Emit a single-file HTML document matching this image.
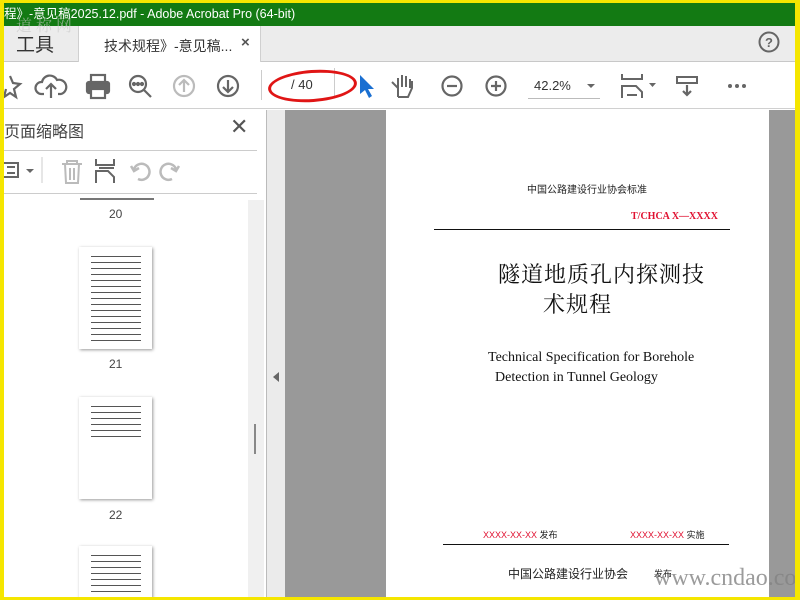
<!DOCTYPE html>
<html><head><meta charset="utf-8"><style>
*{margin:0;padding:0;box-sizing:border-box}
body{width:800px;height:600px;overflow:hidden;background:#f5e600;position:relative;font-family:"Liberation Sans","Noto Sans CJK SC",sans-serif}
.abs{position:absolute}
#app{position:absolute;left:4px;top:3px;width:791px;height:594px;background:#fff;overflow:hidden}
#low{position:absolute;left:0;top:-3px;width:791px;height:600px}
.th{background-color:#fff;box-shadow:1px 1px 3px #999;background-image:repeating-linear-gradient(#fff 0 3px,#555 3px 4px,#fff 4px 6px);background-repeat:no-repeat}
</style></head><body>
<div id="app">
 <div id="low">
 <div class="abs" style="left:0;top:23px;width:791px;height:39px;background:#ececec;border-bottom:1px solid #c8c8c8"></div>
 <div class="abs" style="left:12px;top:30px;font-size:19px;color:#333">工具</div>
 <div class="abs" style="left:74px;top:23px;width:183px;height:40px;background:#fff;border-left:1px solid #d0d0d0;border-right:1px solid #d0d0d0"></div>
 <div class="abs" style="left:100px;top:36px;font-size:14px;color:#333">技术规程》-意见稿...</div>
 <div class="abs" style="left:237px;top:34px;font-size:15px;color:#555;font-weight:bold">×</div>
 <svg class="abs" style="left:754px;top:31px" width="22" height="22"><circle cx="11" cy="11" r="9.5" fill="none" stroke="#666" stroke-width="2"/><text x="11" y="16" font-size="13" font-weight="bold" text-anchor="middle" fill="#666" font-family="Liberation Sans">?</text></svg>
 <div class="abs" style="left:0;top:62px;width:791px;height:47px;background:#fff;border-bottom:1px solid #d0d0d0"></div>
 <svg class="abs" style="left:0;top:70px" width="791" height="34" fill="none" stroke="#666" stroke-width="2.2">
  <path d="M6 6 L9 13 L16 14 L10 19 L12 27 L6 23 L0 27 L2 19" />
  <path d="M40 24 H37 A6 6 0 0 1 38 12 A8 8 0 0 1 53 10 A6 6 0 0 1 57 24 H54 M47 28 V14 M42 19 L47 14 L52 19"/>
  <rect x="83" y="12" width="22" height="11" rx="2" fill="#666"/><rect x="87" y="5" width="14" height="7" fill="#fff"/><rect x="87" y="19" width="14" height="9" fill="#fff"/>
  <circle cx="134" cy="14" r="8"/><path d="M140 20 L147 27"/><circle cx="130" cy="14" r="1" fill="#666"/><circle cx="134" cy="14" r="1" fill="#666"/><circle cx="138" cy="14" r="1" fill="#666"/>
  <g stroke="#bbb"><circle cx="180" cy="16" r="10"/><path d="M180 22 V10 M175 15 L180 10 L185 15"/></g>
  <circle cx="224" cy="16" r="10"/><path d="M224 10 V22 M219 17 L224 22 L229 17"/>
  <path d="M394 27 V18 L388 12 M394 18 V8 M398 17 V5 M402 17 V6 M406 18 V9 M394 27 H404 L408 18 V11" stroke-width="2"/>
  <circle cx="448" cy="16" r="9.5"/><path d="M443 16 H453"/>
  <circle cx="492" cy="16" r="9.5"/><path d="M487 16 H497 M492 11 V21"/>
  <path d="M618 4 V9 H638 V4 M618 28 V16 H632 L638 22 V28 M623 25 H633" stroke-width="2"/>
  <rect x="673" y="7" width="20" height="6" stroke-width="2"/><path d="M683 15 V25 M679 21 L683 25 L687 21"/>
 </svg>
 <svg class="abs" style="left:0;top:70px" width="791" height="34" fill="#666">
  <path d="M583 14 H591 L587 18Z M645 13 H652 L648.5 17Z"/>
  <circle cx="726" cy="16" r="2"/><circle cx="733" cy="16" r="2"/><circle cx="740" cy="16" r="2"/>
  <path d="M356 5 L356 24 L361 20 L365 28 L368 26 L364 19 L370 19Z" fill="#1a6fd1"/>
 </svg>
 <div class="abs" style="left:257px;top:70px;width:1px;height:30px;background:#ccc"></div>
 <div class="abs" style="left:287px;top:77px;font-size:13px;color:#333">/ 40</div>
 <div class="abs" style="left:330px;top:68px;width:1px;height:30px;background:#ccc"></div>
 <div class="abs" style="left:264px;top:70px;width:89px;height:32px;border:3px solid #e01515;border-radius:50%;transform:rotate(-4deg)"></div>
 <div class="abs" style="left:530px;top:78px;font-size:13px;color:#333">42.2%</div>
 <div class="abs" style="left:524px;top:98px;width:72px;height:1px;background:#bbb"></div>
 <div class="abs" style="left:0;top:110px;width:262px;height:490px;background:#fff"></div>
 <div class="abs" style="left:0;top:118px;font-size:16px;color:#444">页面缩略图</div>
 <div class="abs" style="left:226px;top:114px;font-size:22px;color:#555">✕</div>
 <div class="abs" style="left:0;top:150px;width:253px;height:1px;background:#ccc"></div>
 <div class="abs" style="left:0;top:193px;width:253px;height:1px;background:#ccc"></div>
 <svg class="abs" style="left:0;top:155px" width="190" height="34" fill="none" stroke="#666" stroke-width="2">
  <rect x="-4" y="8" width="18" height="14"/><path d="M3 12 H11 M3 18 H11"/><path d="M22 14 H30 L26 18Z" fill="#666" stroke="none"/>
  <path d="M38 2 V28" stroke="#ccc" stroke-width="1"/>
  <g stroke="#bbb"><path d="M58 9 H78 M63 9 V6 H73 V9 M61 9 L62 28 H74 L75 9 M66 13 V25 M70 13 V25"/></g>
  <path d="M92 4 V10 H110 V4 M92 28 V16 H104 L110 22 V28 M95 13 H110" />
  <g stroke="#bbb" stroke-width="2.5"><path d="M134 24 A8 8 0 1 0 130 14 M127 11 L130 16 L135 13"/><path d="M168 24 A8 8 0 1 1 172 14 M175 11 L172 16 L167 13"/></g>
 </svg>
 <div class="abs" style="left:244px;top:200px;width:16px;height:400px;background:#f0f0f0"></div>
 <div class="abs" style="left:250px;top:424px;width:2px;height:30px;background:#888"></div>
 <div class="abs" style="left:262px;top:110px;width:1px;height:490px;background:#bbb"></div>
 <div class="abs" style="left:76px;top:198px;width:74px;height:2px;background:#777"></div>
 <div class="abs" style="left:105px;top:207px;font-size:12px;color:#444">20</div>
 <div class="abs th" style="left:75px;top:247px;width:73px;height:102px;background-size:50px 90px;background-position:12px 6px"></div>
 <div class="abs" style="left:105px;top:357px;font-size:12px;color:#444">21</div>
 <div class="abs th" style="left:75px;top:397px;width:73px;height:102px;background-size:50px 36px;background-position:12px 6px"></div>
 <div class="abs" style="left:105px;top:508px;font-size:12px;color:#444">22</div>
 <div class="abs th" style="left:75px;top:546px;width:73px;height:60px;background-size:50px 60px;background-position:12px 6px"></div>
 <div class="abs" style="left:263px;top:110px;width:18px;height:490px;background:#ebebeb"></div>
 <div class="abs" style="left:269px;top:372px;width:0;height:0;border-top:5px solid transparent;border-bottom:5px solid transparent;border-right:6px solid #666"></div>
 <div class="abs" style="left:281px;top:110px;width:510px;height:490px;background:#999"></div>
 <div class="abs" style="left:382px;top:110px;width:383px;height:490px;background:#fff"></div>
 <div class="abs" style="left:523px;top:181px;font-size:10px;color:#222">中国公路建设行业协会标准</div>
 <div class="abs" style="left:627px;top:211px;font-size:10px;color:#e01030;font-family:'Liberation Serif',serif;font-weight:bold">T/CHCA X—XXXX</div>
 <div class="abs" style="left:430px;top:229px;width:296px;height:1px;background:#111"></div>
 <div class="abs" style="left:494px;top:258px;font-size:22px;color:#111;letter-spacing:1px;font-family:'Liberation Serif','Noto Serif CJK SC',serif">隧道地质孔内探测技</div>
 <div class="abs" style="left:539px;top:288px;font-size:22px;color:#111;letter-spacing:1px;font-family:'Liberation Serif','Noto Serif CJK SC',serif">术规程</div>
 <div class="abs" style="left:484px;top:350px;font-size:14px;color:#111;font-family:'Liberation Serif',serif">Technical Specification for Borehole</div>
 <div class="abs" style="left:491px;top:370px;font-size:14px;color:#111;font-family:'Liberation Serif',serif">Detection in Tunnel Geology</div>
 <div class="abs" style="left:479px;top:528px;font-size:9px;color:#e01030">XXXX-XX-XX <span style="color:#222">发布</span></div>
 <div class="abs" style="left:626px;top:528px;font-size:9px;color:#e01030">XXXX-XX-XX <span style="color:#222">实施</span></div>
 <div class="abs" style="left:439px;top:544px;width:286px;height:1px;background:#111"></div>
 <div class="abs" style="left:504px;top:565px;font-size:12px;color:#222">中国公路建设行业协会</div>
 <div class="abs" style="left:650px;top:567px;font-size:9px;color:#222">发布</div>
 <div class="abs" style="left:650px;top:565px;font-size:24px;color:rgba(130,130,130,.8);font-family:'Liberation Serif',serif;white-space:nowrap">www.cndao.com</div>
 </div>
 <div class="abs" style="left:0;top:0;width:791px;height:23px;background:#137a13;color:#fff;font-size:12.5px;line-height:22px">程》-意见稿2025.12.pdf - Adobe Acrobat Pro (64-bit)</div>
 <div class="abs" style="left:12px;top:10px;color:rgba(200,200,200,.6);font-size:16px;font-family:'Liberation Serif','Noto Serif CJK SC',serif;letter-spacing:4px">道称网</div>
</div>
</body></html>
